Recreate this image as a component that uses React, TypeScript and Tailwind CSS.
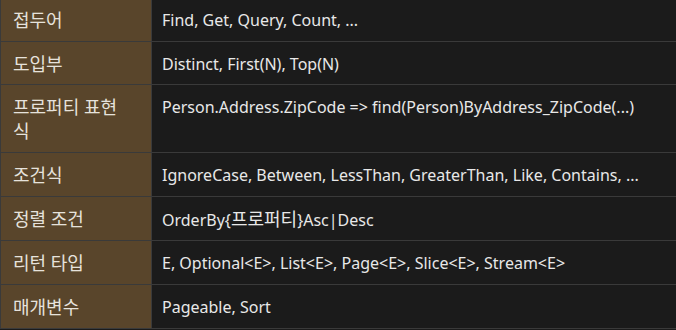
import React from 'react';

// Spring Data 쿼리 메서드 이름 규칙 요약표
const rows: Array<[string, string]> = [
  ['접두어', 'Find, Get, Query, Count, ...'],
  ['도입부', 'Distinct, First(N), Top(N)'],
  ['프로퍼티 표현식', 'Person.Address.ZipCode => find(Person)ByAddress_ZipCode(...)'],
  ['조건식', 'IgnoreCase, Between, LessThan, GreaterThan, Like, Contains, ...'],
  ['정렬 조건', 'OrderBy{프로퍼티}Asc|Desc'],
  ['리턴 타입', 'E, Optional<E>, List<E>, Page<E>, Slice<E>, Stream<E>'],
  ['매개변수', 'Pageable, Sort'],
];

// 한글 구간은 라틴 글자보다 살짝 크게 보여준다
function Mixed({ text }: { text: string }) {
  const parts = text.split(/([\uac00-\ud7a3]+)/);
  return (
    <>
      {parts.map((p, i) =>
        /[\uac00-\ud7a3]/.test(p) ? (
          <span key={i} className="text-[18px]">
            {p}
          </span>
        ) : (
          <React.Fragment key={i}>{p}</React.Fragment>
        )
      )}
    </>
  );
}

export default function App() {
  return (
    <div
      className="w-[676px] h-[330px] overflow-hidden bg-[#1b1b1b] text-[16px] leading-[24px]"
      style={{ fontFamily: '"Noto Sans", "Noto Sans CJK KR", sans-serif' }}
    >
      <div className="-mt-[2px] grid grid-cols-[151px_1fr] border-l border-[#3a3a3a]">
        {rows.map(([label, value]) => (
          <React.Fragment key={label}>
            <div className="bg-[#59452b] text-[#e6e2dc] text-[18px] leading-[24px] border-r border-b border-[#3a3a3a] pl-[12px] pr-[24px] pt-[10px] pb-[8.7px]">
              {label}
            </div>
            <div className="bg-[#1b1b1b] text-[#e8e8e8] border-b border-[#3a3a3a] pl-[10px] pr-2 pt-[10px] pb-[8.7px]">
              <Mixed text={value} />
            </div>
          </React.Fragment>
        ))}
      </div>
    </div>
  );
}
